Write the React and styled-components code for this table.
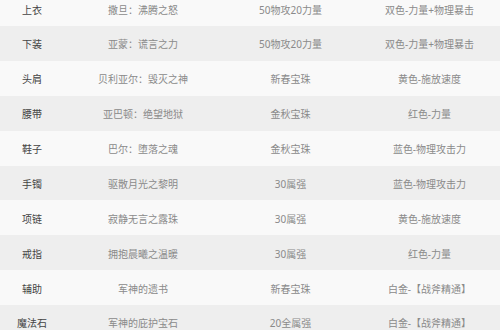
import React from 'react'
import styled, { createGlobalStyle } from 'styled-components'

const rows = [
  ['上衣', '撒旦：沸腾之怒', '50物攻20力量', '双色-力量+物理暴击'],
  ['下装', '亚蒙：谎言之力', '50物攻20力量', '双色-力量+物理暴击'],
  ['头肩', '贝利亚尔：毁灭之神', '新春宝珠', '黄色-施放速度'],
  ['腰带', '亚巴顿：绝望地狱', '金秋宝珠', '红色-力量'],
  ['鞋子', '巴尔：堕落之魂', '金秋宝珠', '蓝色-物理攻击力'],
  ['手镯', '驱散月光之黎明', '30属强', '蓝色-物理攻击力'],
  ['项链', '寂静无言之露珠', '30属强', '黄色-施放速度'],
  ['戒指', '拥抱晨曦之温暖', '30属强', '红色-力量'],
  ['辅助', '军神的遗书', '新春宝珠', '白金-【战斧精通】'],
  ['魔法石', '军神的庇护宝石', '20全属强', '白金-【战斧精通】'],
]

function App() {
  return (
    <>
      <Global />
      <Table>
        {rows.map((r, i) => (
          <Row key={i} $alt={i % 2 === 1}>
            <Slot>{r[0]}</Slot>
            <Cell>{r[1]}</Cell>
            <Cell>{r[2]}</Cell>
            <Cell>{r[3]}</Cell>
          </Row>
        ))}
      </Table>
    </>
  )
}

export default App

const Global = createGlobalStyle`
body{
  margin:0;
  background:#f9f9f9;
  overflow:hidden;
}
`

const Table = styled.div`
width:500px;
margin-top:-8.875px;
font-family:"Noto Sans","Noto Sans CJK SC",sans-serif;
font-size:10px;
`

const Row = styled.div`
display:grid;
grid-template-columns:64px 158px 137px 141px;
height:34.875px;
align-items:center;
padding-top:2px;
box-sizing:border-box;
background:${p => (p.$alt ? '#eeeeee' : '#f9f9f9')};
`

const Cell = styled.div`
text-align:center;
color:#8a8a8a;
white-space:nowrap;
line-height:14px;
`

const Slot = styled(Cell)`
color:#444;
`
